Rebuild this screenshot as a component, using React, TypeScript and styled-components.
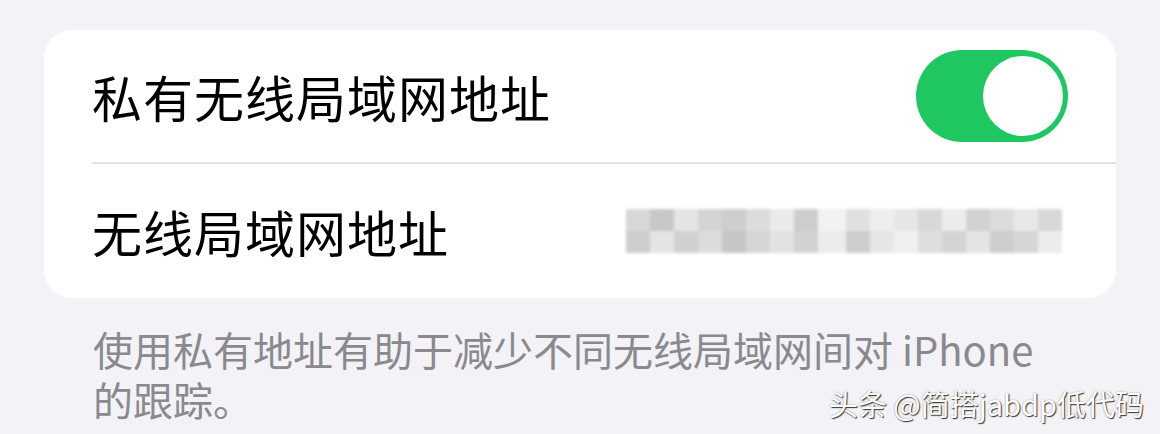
import styled, { createGlobalStyle } from 'styled-components'

const GlobalStyle = createGlobalStyle`
    html, body {
        margin: 0;
        padding: 0;
        background: #f2f2f7;
    }
    body {
        font-family: "Noto Sans CJK SC", "Noto Sans", sans-serif;
    }
`

const Page = styled.div`
    position: relative;
    width: 1160px;
    height: 434px;
    overflow: hidden;
    padding: 30px 44px 0;
    box-sizing: border-box;
`

const Card = styled.div`
    background: #fff;
    border-radius: 28px;
    overflow: hidden;
`

const Row = styled.div<{ $divider?: boolean }>`
    height: 134px;
    display: flex;
    align-items: center;
    justify-content: space-between;
    margin-left: 48px;
    padding-right: 44px;
    box-sizing: border-box;
    border-bottom: ${p => (p.$divider ? '2px solid #e3e3e6' : 'none')};
`

const Label = styled.span`
    font-size: 50px;
    color: #000;
    letter-spacing: 1px;
    line-height: 1;
`

const Toggle = styled.div<{ $on: boolean }>`
    width: 152px;
    height: 92px;
    margin-right: 4px;
    border-radius: 46px;
    background: ${p => (p.$on ? '#1ec760' : '#e9e9ea')};
    display: flex;
    align-items: center;
    justify-content: ${p => (p.$on ? 'flex-end' : 'flex-start')};
    padding: 0 5px;
    box-sizing: border-box;
`

const Knob = styled.div`
    width: 80px;
    height: 80px;
    border-radius: 50%;
    background: #fff;
`

const Footer = styled.p`
    margin: 26px 0 0 49px;
    width: 965px;
    font-size: 40px;
    line-height: 50px;
    color: #8a8a8e;
`

const Watermark = styled.div`
    position: absolute;
    right: 16px;
    bottom: 10px;
    font-size: 29px;
    color: #fff;
    text-shadow: 1px 1px 1px rgba(0, 0, 0, 0.75), 0 0 2px rgba(0, 0, 0, 0.35);
`

// blurred mosaic over the hardware address
const shades = [
    [215, 200, 228, 212, 206, 220, 234, 205, 242, 224, 238, 230, 216, 236, 210, 220, 232, 216],
    [205, 228, 208, 220, 198, 214, 226, 210, 236, 206, 230, 240, 222, 212, 228, 206, 214, 236],
]

function MaskedAddress() {
    const cell = 24
    return (
        <svg width="450" height="52" viewBox="0 0 450 52">
            <defs>
                <filter id="soft" x="-5%" y="-20%" width="110%" height="140%">
                    <feGaussianBlur stdDeviation="1.6" />
                </filter>
            </defs>
            <g filter="url(#soft)">
                {shades.map((row, r) =>
                    row.map((v, c) => (
                        <rect
                            key={`${r}-${c}`}
                            x={4 + c * cell + (c > 8 ? 4 : 0)}
                            y={4 + r * 22}
                            width={c === 8 ? cell + 4 : cell}
                            height={22}
                            fill={`rgb(${v},${v},${v})`}
                        />
                    ))
                )}
            </g>
        </svg>
    )
}

export default function App() {
    return (
        <>
            <GlobalStyle />
            <Page>
                <Card>
                    <Row $divider>
                        <Label>私有无线局域网地址</Label>
                        <Toggle $on>
                            <Knob />
                        </Toggle>
                    </Row>
                    <Row>
                        <Label>无线局域网地址</Label>
                        <MaskedAddress />
                    </Row>
                </Card>
                <Footer>使用私有地址有助于减少不同无线局域网间对 iPhone 的跟踪。</Footer>
                <Watermark>头条 @简搭jabdp低代码</Watermark>
            </Page>
        </>
    )
}
